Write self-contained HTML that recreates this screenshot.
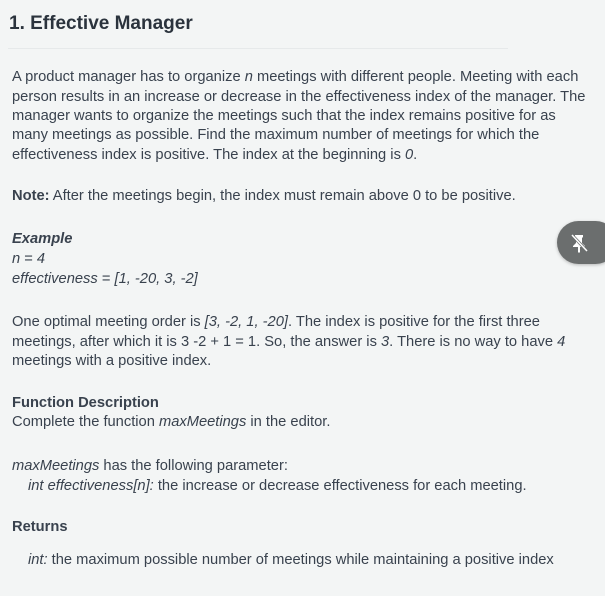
<!DOCTYPE html>
<html><head><style>
body{margin:0;width:605px;height:596px;background:#f3f5f5;font-family:"Liberation Sans",sans-serif;color:#39424e;overflow:hidden;position:relative}
.l{position:absolute;left:12px;font-size:14.7px;white-space:nowrap;line-height:18px}
i{font-style:italic}
b{font-weight:bold}
</style></head><body>
<div style="position:absolute;left:9px;top:13px;font-size:19px;font-weight:bold;color:#2b333d">1. Effective Manager</div>
<div style="position:absolute;left:8px;top:48px;width:500px;height:1px;background:#e6e9ea"></div>
<div class="l" style="top:68px">A product manager has to organize <i>n</i> meetings with different people. Meeting with each</div>
<div class="l" style="top:88px">person results in an increase or decrease in the effectiveness index of the manager. The</div>
<div class="l" style="top:107px">manager wants to organize the meetings such that the index remains positive for as</div>
<div class="l" style="top:126px">many meetings as possible. Find the maximum number of meetings for which the</div>
<div class="l" style="top:146px">effectiveness index is positive. The index at the beginning is <i>0</i>.</div>
<div class="l" style="top:187px"><b>Note:</b> After the meetings begin, the index must remain above 0 to be positive.</div>
<div class="l" style="top:230px"><b><i>Example</i></b></div>
<div class="l" style="top:250px"><i>n</i> = <i>4</i></div>
<div class="l" style="top:270px"><i>effectiveness</i> = <i>[1, -20, 3, -2]</i></div>
<div class="l" style="top:313px">One optimal meeting order is <i>[3, -2, 1, -20]</i>. The index is positive for the first three</div>
<div class="l" style="top:333px">meetings, after which it is 3 -2 + 1 = 1. So, the answer is <i>3</i>. There is no way to have <i>4</i></div>
<div class="l" style="top:352px">meetings with a positive index.</div>
<div class="l" style="top:394px"><b>Function Description</b></div>
<div class="l" style="top:413px">Complete the function <i>maxMeetings</i> in the editor.</div>
<div class="l" style="top:457px"><i>maxMeetings</i> has the following parameter:</div>
<div class="l" style="top:477px;left:28px"><i>int effectiveness[n]:</i> the increase or decrease effectiveness for each meeting.</div>
<div class="l" style="top:518px"><b>Returns</b></div>
<div class="l" style="top:551px;left:28px"><i>int:</i> the maximum possible number of meetings while maintaining a positive index</div>
<div style="position:absolute;left:557px;top:221px;width:60px;height:43px;border-radius:22px;background:#6b6e6e;box-shadow:0 1px 3px rgba(0,0,0,.25)">
<svg width="24" height="24" viewBox="0 0 24 24" style="position:absolute;left:10px;top:10px"><path d="M8 4h8v2l-1 1v5l3 3v1h-5v5l-1 1-1-1v-5H6v-1l3-3V7L8 6z" fill="#fff"/><path d="M5 4l15 16" stroke="#6b6e6e" stroke-width="3"/><path d="M5 4l15 16" stroke="#fff" stroke-width="1.5"/></svg>
</div>
</body></html>
